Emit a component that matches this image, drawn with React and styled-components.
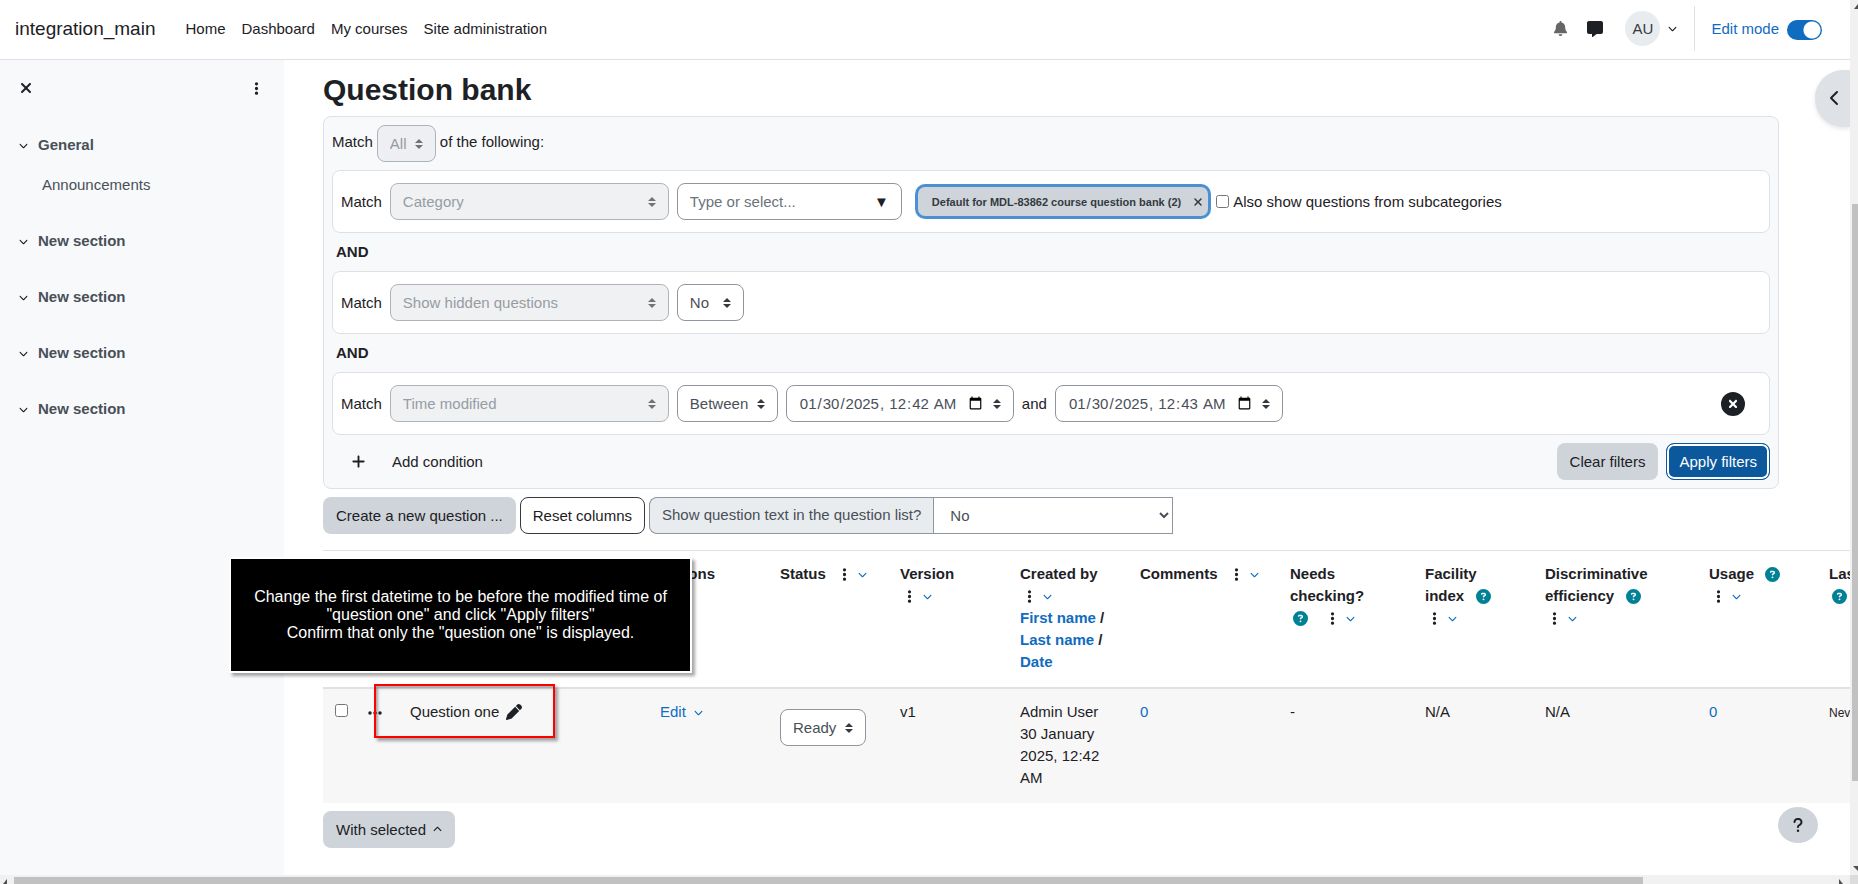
import React from 'react'
import styled, { createGlobalStyle } from 'styled-components'
import {
    FaBell,
    FaMessage,
    FaChevronDown,
    FaChevronUp,
    FaChevronLeft,
    FaXmark,
    FaEllipsis,
    FaEllipsisVertical,
    FaCircleQuestion,
    FaCircleXmark,
    FaPen,
    FaPlus,
    FaQuestion
} from 'react-icons/fa6'

const sections = [
    { name: 'General', items: ['Announcements'] },
    { name: 'New section', items: [] },
    { name: 'New section', items: [] },
    { name: 'New section', items: [] },
    { name: 'New section', items: [] }
]

const columns = [32, 43, 250, 120, 120, 120, 120, 150, 135, 120, 164, 120, 160]

function Help() {
    return <HelpButton aria-label="Help"><FaCircleQuestion size={15}/></HelpButton>
}

function ColumnMenu() {
    return (
        <Menu aria-label="Column actions">
            <FaEllipsisVertical size={15}/>
            <FaChevronDown size={9} color="#0f6cbf"/>
        </Menu>
    )
}

function Heading({ children, menu = true }) {
    return (
        <Th>
            <HeadingInner>
                <span>{children}</span>
                {menu && <ColumnMenu/>}
            </HeadingInner>
        </Th>
    )
}

function Condition({ type, children }) {
    return (
        <Card>
            <span>Match</span>
            <Select $width="279px" disabled aria-label="Filter type"><option>{type}</option></Select>
            {children}
        </Card>
    )
}

export default function App() {

    return (
        <Window>
            <GlobalStyle/>
            <Page>
                <Navbar>
                    <Brand href="#">integration_main</Brand>
                    <NavLinks>
                        <a href="#">Home</a>
                        <a href="#">Dashboard</a>
                        <a href="#">My courses</a>
                        <a href="#">Site administration</a>
                    </NavLinks>
                    <UserTools>
                        <IconButton aria-label="Notifications"><FaBell size={15} color="#666"/></IconButton>
                        <IconButton aria-label="Messages"><FaMessage size={16}/></IconButton>
                        <UserButton>
                            <Avatar>AU</Avatar>
                            <FaChevronDown size={9}/>
                        </UserButton>
                    </UserTools>
                    <EditMode>
                        Edit mode
                        <Toggle type="checkbox" defaultChecked/>
                    </EditMode>
                </Navbar>

                <Body>
                    <Drawer>
                        <DrawerHeader>
                            <IconButton aria-label="Close"><FaXmark size={16}/></IconButton>
                            <IconButton aria-label="Options"><FaEllipsisVertical size={15}/></IconButton>
                        </DrawerHeader>
                        {sections.map((section, i) => (
                            <Section key={i}>
                                <SectionTitle href="#">
                                    <FaChevronDown size={9} color="#1d2125"/>
                                    {section.name}
                                </SectionTitle>
                                {section.items.map((item) => <SectionItem href="#" key={item}>{item}</SectionItem>)}
                            </Section>
                        ))}
                    </Drawer>

                    <Main>
                        <Title>Question bank</Title>
                        <Filters>
                            <MatchRow>
                                <span>Match</span>
                                <Select disabled aria-label="Join type"><option>All</option></Select>
                                <span>of the following:</span>
                            </MatchRow>
                            <Condition type="Category">
                                <Combo>
                                    <input type="text" placeholder="Type or select..." aria-label="Category"/>
                                    <span>▼</span>
                                </Combo>
                                <TagGroup>
                                    <Tag>Default for MDL-83862 course question bank (2) <FaXmark size={12}/></Tag>
                                    <CheckLabel>
                                        <Checkbox type="checkbox"/>
                                        Also show questions from subcategories
                                    </CheckLabel>
                                </TagGroup>
                            </Condition>
                            <And>AND</And>
                            <Condition type="Show hidden questions">
                                <Select $width="67px" aria-label="Show hidden questions"><option>No</option></Select>
                            </Condition>
                            <And>AND</And>
                            <Condition type="Time modified">
                                <Select aria-label="Range type"><option>Between</option></Select>
                                <DateInput type="datetime-local" defaultValue="2025-01-30T00:42" aria-label="From"/>
                                <span>and</span>
                                <DateInput type="datetime-local" defaultValue="2025-01-30T00:43" aria-label="To"/>
                                <RemoveButton aria-label="Remove condition"><FaCircleXmark size={24}/></RemoveButton>
                            </Condition>
                            <FilterActions>
                                <AddButton><FaPlus size={15}/>Add condition</AddButton>
                                <Button>Clear filters</Button>
                                <PrimaryButton>Apply filters</PrimaryButton>
                            </FilterActions>
                        </Filters>

                        <Toolbar>
                            <Button>Create a new question ...</Button>
                            <OutlineButton>Reset columns</OutlineButton>
                            <InputGroup>
                                <label htmlFor="qtext">Show question text in the question list?</label>
                                <select id="qtext"><option>No</option></select>
                            </InputGroup>
                        </Toolbar>

                        <Table>
                            <colgroup>
                                {columns.map((width, i) => <Column key={i} $width={width}/>)}
                            </colgroup>
                            <thead>
                                <tr>
                                    <Th/>
                                    <Th/>
                                    <Th/>
                                    <Heading menu={false}>Actions</Heading>
                                    <Heading>Status</Heading>
                                    <Heading menu={false}>Version<br/><ColumnMenu/></Heading>
                                    <Heading menu={false}>
                                        Created by<br/>
                                        <ColumnMenu/><br/>
                                        <a href="#">First name</a> /<br/>
                                        <a href="#">Last name</a> /<br/>
                                        <a href="#">Date</a>
                                    </Heading>
                                    <Heading>Comments</Heading>
                                    <Heading menu={false}>Needs checking?<br/><Help/><Spaced><ColumnMenu/></Spaced></Heading>
                                    <Heading>Facility<br/>index &nbsp;<Help/></Heading>
                                    <Heading>Discriminative efficiency &nbsp;<Help/></Heading>
                                    <Heading>Usage &nbsp;<Help/></Heading>
                                    <Heading menu={false}>Last used<br/><Help/></Heading>
                                </tr>
                            </thead>
                            <tbody>
                                <tr>
                                    <Td><Checkbox type="checkbox" aria-label="Select question"/></Td>
                                    <Td><FaEllipsis size={16}/></Td>
                                    <Td><QuestionName>Question one <FaPen size={16}/></QuestionName></Td>
                                    <Td><LinkButton>Edit <FaChevronDown size={9}/></LinkButton></Td>
                                    <Td><StatusSelect aria-label="Status"><option>Ready</option></StatusSelect></Td>
                                    <Td>v1</Td>
                                    <Td>Admin User<br/>30 January 2025, 12:42 AM</Td>
                                    <Td><a href="#">0</a></Td>
                                    <Td>-</Td>
                                    <Td>N/A</Td>
                                    <Td>N/A</Td>
                                    <Td><a href="#">0</a></Td>
                                    <Td><small>Never</small></Td>
                                </tr>
                            </tbody>
                        </Table>
                        <MenuButton>With selected <FaChevronUp size={9}/></MenuButton>
                    </Main>
                </Body>

                <DrawerToggle aria-label="Open block drawer"><FaChevronLeft size={16}/></DrawerToggle>
                <HelpFloat aria-label="Show footer"><FaQuestion size={16}/></HelpFloat>
                <RedBox/>
                <Callout>
                    Change the first datetime to be before the modified time of<br/>
                    "question one" and click "Apply filters"<br/>
                    Confirm that only the "question one" is displayed.
                </Callout>
            </Page>
            <VerticalBar>
                <Arrow viewBox="0 0 8 5"><path d="M8 0v5H4z"/></Arrow>
                <VerticalThumb/>
                <Arrow viewBox="0 0 8 5"><path d="M3 0h5v5z"/></Arrow>
            </VerticalBar>
            <HorizontalBar>
                <Arrow viewBox="0 0 8 5"><path d="M7 0v5H3z"/></Arrow>
                <HorizontalThumb/>
                <Arrow viewBox="0 0 8 5"><path d="M1 0v5h4z"/></Arrow>
            </HorizontalBar>
            <Corner/>
        </Window>
    )
}

const GlobalStyle = createGlobalStyle`
    * {
        box-sizing: border-box;
    }
    body {
        margin: 0;
        overflow: hidden;
        font-family: "Liberation Sans", Arial, sans-serif;
        font-size: 15px;
        line-height: 22px;
        color: #1d2125;
        background: #fff;
    }
    button, input, select {
        font: inherit;
        color: inherit;
        margin: 0;
    }
    button {
        padding: 0;
        border: 0;
        background: none;
        cursor: pointer;
    }
    a {
        color: #0f6cbf;
        text-decoration: none;
    }
    small {
        font-size: 12px;
    }
`

const Window = styled.div`
    display: grid;
    grid-template: minmax(0, 1fr) 9px / minmax(0, 1fr) 8px;
    height: 100vh;
`

const Page = styled.div`
    position: relative;
    display: flex;
    flex-direction: column;
    overflow: hidden;
`

const Navbar = styled.header`
    display: flex;
    align-items: center;
    height: 60px;
    flex: none;
    padding: 0 28px 2px 15px;
    border-bottom: 1px solid #dee2e6;
`

const Brand = styled.a`
    font-size: 19px;
    color: #1d2125;
`

const NavLinks = styled.nav`
    display: flex;
    gap: 16px;
    margin-left: 30px;

    a {
        color: #1d2125;
    }
`

const UserTools = styled.div`
    display: flex;
    align-items: center;
    gap: 19px;
    height: 45px;
    margin-left: auto;
    padding-right: 17px;
    border-right: 1px solid #dee2e6;
`

const IconButton = styled.button`
    display: flex;
    align-items: center;
`

const UserButton = styled.button`
    display: flex;
    align-items: center;
    gap: 8px;
    margin-left: 3px;
`

const Avatar = styled.span`
    width: 35px;
    height: 35px;
    border-radius: 50%;
    line-height: 35px;
    text-align: center;
    background: #e9ecef;
    color: #343a40;
`

const EditMode = styled.label`
    display: flex;
    align-items: center;
    gap: 8px;
    padding-left: 16px;
    color: #0f6cbf;
`

const Toggle = styled.input`
    appearance: none;
    width: 35px;
    height: 20px;
    margin-top: 3px;
    border-radius: 10px;
    background: radial-gradient(circle at 25px 10px, #fff 8px, #0f6cbf 9px);
`

const Body = styled.div`
    display: flex;
    flex: 1;
    min-height: 0;
`

const Drawer = styled.aside`
    flex: 0 0 284px;
    background: #f8f9fb;
`

const DrawerHeader = styled.div`
    display: flex;
    justify-content: space-between;
    padding: 20px 20px 26px 18px;
`

const Section = styled.div`
    padding: 12px 0 22px 19px;
`

const SectionTitle = styled.a`
    display: flex;
    align-items: center;
    gap: 10px;
    font-weight: bold;
    color: #495057;
`

const SectionItem = styled.a`
    display: block;
    padding: 18px 0 0 23px;
    color: #495057;
`

const Main = styled.main`
    flex: 1;
    min-width: 0;
    padding: 12px 71px 0 39px;
`

const Title = styled.h1`
    margin: 0 0 8px;
    font-size: 30px;
    line-height: 36px;
`

const Filters = styled.section`
    padding: 8px;
    border: 1px solid #dee2e6;
    border-radius: 8px;
    background: #f8f9fb;
`

const MatchRow = styled.div`
    display: flex;
    align-items: center;
    gap: 4px;
    margin-bottom: 8px;

    span {
        padding-bottom: 4px;
    }
`

const Card = styled.div`
    display: flex;
    align-items: center;
    gap: 8px;
    padding: 12px 8px;
    border: 1px solid #dee2e6;
    border-radius: 8px;
    background: #fff;
`

const And = styled.div`
    padding: 8px 4px;
    font-weight: bold;
`

const arrows = `url("data:image/svg+xml,%3Csvg xmlns='http://www.w3.org/2000/svg' viewBox='0 0 4 5'%3E%3Cpath fill='%23343a40' d='M2 0L0 2h4zm0 5L0 3h4z'/%3E%3C/svg%3E")`

const Select = styled.select`
    appearance: none;
    width: ${(props) => props.$width || 'auto'};
    height: 37px;
    padding: 6px 28px 6px 12px;
    border: 1px solid #8f959e;
    border-radius: 8px;
    color: #495057;
    background: #fff ${arrows} right 12px center / 8px 10px no-repeat;

    &:disabled {
        color: #6a737b;
        background-color: #e9ecef;
        opacity: 0.7;
    }
`

const StatusSelect = styled(Select)`
    display: block;
    margin-top: 8px;
`

const DateInput = styled.input`
    width: 228px;
    height: 37px;
    padding: 6px 28px 6px 12px;
    border: 1px solid #8f959e;
    border-radius: 8px;
    color: #495057;
    background: #fff ${arrows} right 12px center / 8px 10px no-repeat;
`

const Combo = styled.div`
    display: flex;
    align-items: center;
    width: 225px;
    height: 37px;
    padding: 0 12px;
    border: 1px solid #8f959e;
    border-radius: 8px;

    input {
        flex: 1;
        min-width: 0;
        padding: 0;
        border: 0;
        outline: 0;
    }
    input::placeholder {
        color: #6a737b;
    }
`

const TagGroup = styled.div`
    display: flex;
    align-items: center;
    gap: 8px;
    padding-left: 8px;
`

const Tag = styled.button`
    display: flex;
    align-items: center;
    gap: 11px;
    height: 29px;
    padding: 0 4px 0 14px;
    border-radius: 7px;
    font-size: 11px;
    font-weight: bold;
    color: #343a40;
    background: #ced4da;
    box-shadow: 0 0 0 3px #4a90d2;
`

const CheckLabel = styled.label`
    display: flex;
    align-items: center;
    gap: 4px;
`

const Checkbox = styled.input`
    width: 13px;
    height: 13px;
`

const RemoveButton = styled.button`
    display: flex;
    margin: 0 16px 0 auto;
`

const FilterActions = styled.div`
    display: flex;
    gap: 8px;
    margin-top: 8px;
`

const Button = styled.button`
    height: 37px;
    padding: 0 13px;
    border-radius: 8px;
    background: #ced4da;
`

const OutlineButton = styled(Button)`
    border: 1px solid #343a40;
    padding: 0 12px;
    background: #fff;
`

const PrimaryButton = styled(Button)`
    border: 1px solid #0c589c;
    padding: 0 12px;
    color: #fff;
    background: #0c589c;
    box-shadow: inset 0 0 0 2px #fff;
`

const MenuButton = styled(Button)`
    display: flex;
    align-items: center;
    gap: 7px;
`

const AddButton = styled.button`
    display: flex;
    align-items: center;
    gap: 26px;
    margin-right: auto;
    padding-left: 19px;
`

const Toolbar = styled.div`
    display: flex;
    gap: 4px;
    margin: 8px 0 16px;
`

const InputGroup = styled.div`
    display: flex;
    height: 37px;
    color: #495057;

    label {
        padding: 6px 12px;
        border: 1px solid #8f959e;
        border-right: 0;
        border-radius: 8px 0 0 8px;
        background: #e9ecef;
    }
    select {
        width: 240px;
        padding: 0 12px;
        border: 1px solid #8f959e;
        border-radius: 0;
        background: #fff;
    }
`

const Table = styled.table`
    width: 1654px;
    margin-bottom: 8px;
    table-layout: fixed;
    border-collapse: separate;
    border-spacing: 0;
`

const Column = styled.col`
    width: ${(props) => props.$width}px;
`

const Th = styled.th`
    height: 139px;
    padding: 12px;
    border-top: 1px solid #dee2e6;
    border-bottom: 2px solid #dee2e6;
    text-align: left;
    vertical-align: top;
`

const HeadingInner = styled.div`
    display: flex;
    flex-wrap: wrap;
    column-gap: 9px;
`

const Td = styled.td`
    height: 114px;
    padding: 12px;
    vertical-align: top;
    background: #f7f7f7;

    svg {
        vertical-align: middle;
    }
`

const QuestionName = styled.div`
    display: flex;
    align-items: center;
    gap: 7px;
`

const Menu = styled.button`
    display: inline-flex;
    align-items: center;
    gap: 6px;
    height: 22px;
    padding-left: 2px;
    vertical-align: top;
`

const Spaced = styled.span`
    margin-left: 12px;
`

const HelpButton = styled.button`
    display: inline-flex;
    align-items: center;
    height: 22px;
    padding: 0 3px;
    vertical-align: top;
    color: #008196;
`

const LinkButton = styled.button`
    display: flex;
    align-items: center;
    gap: 8px;
    color: #0f6cbf;
`

const DrawerToggle = styled.button`
    position: absolute;
    top: 70px;
    right: 0;
    width: 35px;
    height: 57px;
    padding: 4px 0 0 4px;
    border-radius: 28px 0 0 28px;
    background: #dee2e6;
    box-shadow: 0 2px 4px rgba(0, 0, 0, 0.1);
`

const HelpFloat = styled.button`
    position: absolute;
    right: 32px;
    bottom: 32px;
    display: flex;
    align-items: center;
    justify-content: center;
    width: 40px;
    height: 36px;
    border-radius: 50%;
    background: #ced4da;
`

const RedBox = styled.div`
    position: absolute;
    top: 684px;
    left: 374px;
    width: 181px;
    height: 54px;
    border: 2px solid #f00;
    box-shadow: 3px 3px 3px rgba(0, 0, 0, 0.35), inset 2px 2px 3px rgba(0, 0, 0, 0.35);
`

const Callout = styled.div`
    position: absolute;
    top: 557px;
    left: 229px;
    width: 463px;
    height: 116px;
    padding-top: 29px;
    border: 2px solid #fff;
    font-size: 16px;
    line-height: 18px;
    text-align: center;
    color: #fff;
    background: #000;
    box-shadow: 3px 3px 3px rgba(0, 0, 0, 0.35);
`

const VerticalBar = styled.div`
    display: flex;
    flex-direction: column;
    align-items: flex-end;
    padding: 4px 0;
    background: #f1f1f1;
`

const VerticalThumb = styled.div`
    flex: 1;
    width: 6px;
    margin: 195px 0 85px;
    background: #c1c1c1;
`

const HorizontalBar = styled.div`
    display: flex;
    align-items: flex-end;
    padding: 0 4px 0 0;
    background: #f1f1f1;
`

const HorizontalThumb = styled.div`
    flex: 1;
    height: 7px;
    margin: 0 195px 0 6px;
    background: #c1c1c1;
`

const Arrow = styled.svg`
    flex: none;
    width: 8px;
    height: 5px;
    fill: #505050;
`

const Corner = styled.div`
    background: #dcdcdc;
`
